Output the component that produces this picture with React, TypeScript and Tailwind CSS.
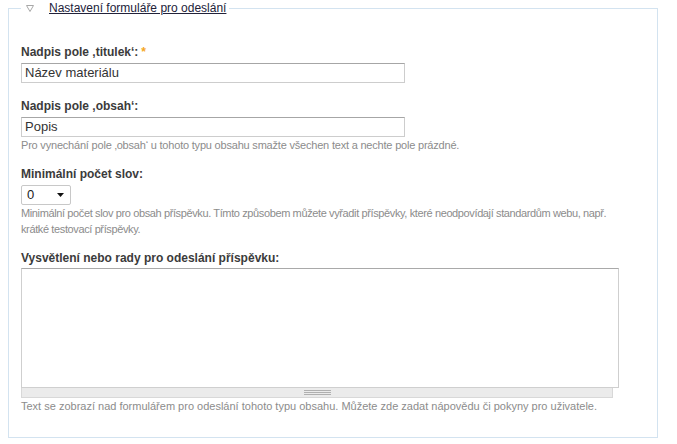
import React from 'react';

const font = { fontFamily: '"Liberation Sans", Arial, sans-serif' };

function Label({ text, required }: { text: string; required?: boolean }) {
  return (
    <div className="h-4 leading-4 text-[12px] font-bold text-[#3b3b3b]">
      {text}
      {required && <span className="ml-[3px] text-[#f5a623]">*</span>}
    </div>
  );
}

function Description({ children, className = '' }: { children: React.ReactNode; className?: string }) {
  return <div className={`text-[11px] leading-4 text-[#8c8c8c] whitespace-nowrap ${className}`}>{children}</div>;
}

function TextInput({ value }: { value: string }) {
  return (
    <div className="mt-[3px] h-5 w-[384px] border border-[#cdcdcd] border-t-[#a6a6a6] pl-[3px] text-[13px] leading-[18px] text-[#333]">
      {value}
    </div>
  );
}

export default function App() {
  return (
    <div className="bg-white w-[677px] h-[444px] overflow-hidden" style={font}>
      <fieldset className="ml-2 mt-[1px] w-[650px] h-[437px] border border-[#d3e3f0] px-3 pb-0 pt-0">
        <legend className="flex items-center h-[14px] pl-[5px] pr-[3px]">
          <svg width="8" height="7" viewBox="0 0 8 7" className="mr-[15px]">
            <path d="M0.5 0.5 H7.5 L4 6.5 Z" fill="none" stroke="#a8a8a8" strokeWidth="1" />
          </svg>
          <span className="text-[12px] leading-[14px] text-[#22223a] underline">Nastavení formuláře pro odeslání</span>
        </legend>

        <div className="mt-[29px]">
          <Label text="Nadpis pole ‚titulek‘:" required />
          <TextInput value="Název materiálu" />
        </div>

        <div className="mt-[15px]">
          <Label text="Nadpis pole ‚obsah‘:" />
          <TextInput value="Popis" />
          <Description className="tracking-[-0.2px]">
            Pro vynechání pole ‚obsah‘ u tohoto typu obsahu smažte všechen text a nechte pole prázdné.
          </Description>
        </div>

        <div className="mt-[13px]">
          <Label text="Minimální počet slov:" />
          <div className="mt-[3px] flex h-5 w-[50px] items-center justify-between rounded-[2px] border border-[#c8c8c8] pl-[5px] pr-[6px] text-[13px] text-[#222]">
            <span>0</span>
            <svg width="7" height="4" viewBox="0 0 7 4">
              <path d="M0 0 H7 L3.5 4 Z" fill="#111" />
            </svg>
          </div>
          <Description className="tracking-[-0.38px]">
            Minimální počet slov pro obsah příspěvku. Tímto způsobem můžete vyřadit příspěvky, které neodpovídají standardům webu, např.
            <br />
            krátké testovací příspěvky.
          </Description>
        </div>

        <div className="mt-[13px]">
          <Label text="Vysvětlení nebo rady pro odeslání příspěvku:" />
          <div className="mt-[2px] h-[120px] w-[598px] border border-[#cfcfcf] border-t-[#a9a9a9] bg-white" />
          <div className="flex h-[10px] w-[592px] flex-col items-center justify-center gap-[1px] border border-t-0 border-[#d8d8d8] bg-[#ebebeb]">
            <div className="h-px w-[27px] bg-[#b0b0b0]" />
            <div className="h-px w-[27px] bg-[#b0b0b0]" />
            <div className="h-px w-[27px] bg-[#b0b0b0]" />
          </div>
          <Description>
            Text se zobrazí nad formulářem pro odeslání tohoto typu obsahu. Můžete zde zadat nápovědu či pokyny pro uživatele.
          </Description>
        </div>
      </fieldset>
    </div>
  );
}
